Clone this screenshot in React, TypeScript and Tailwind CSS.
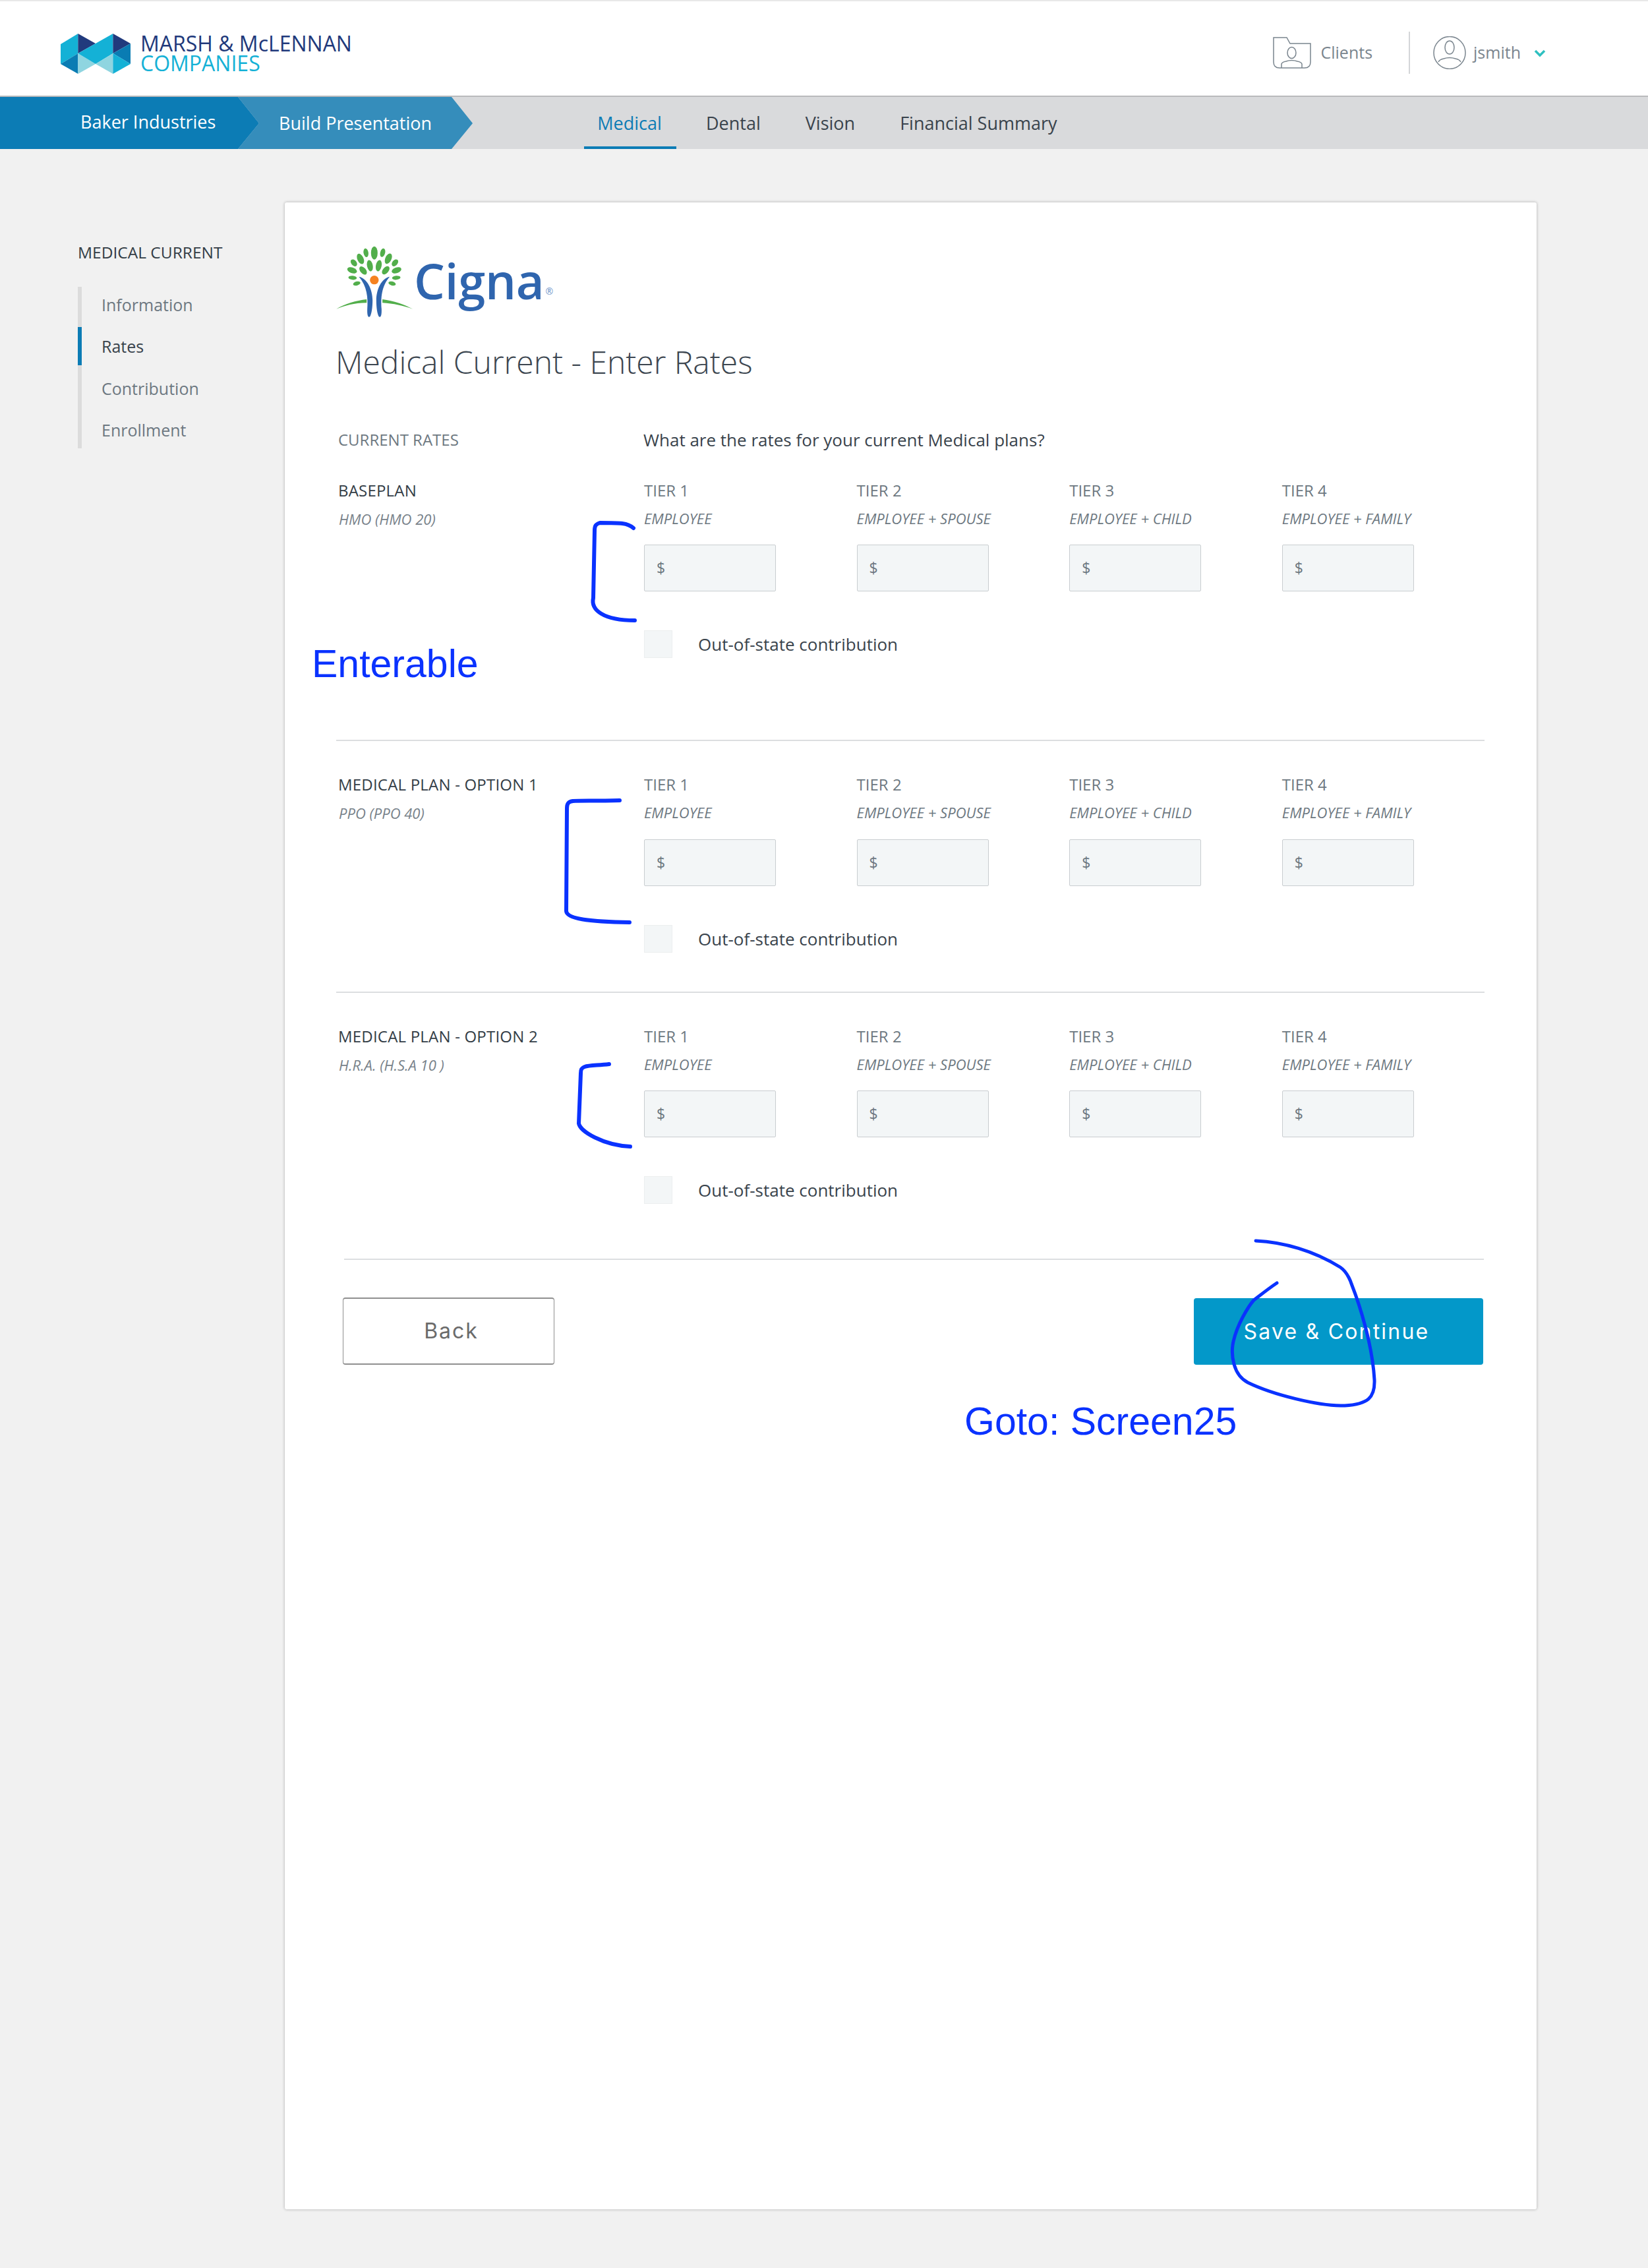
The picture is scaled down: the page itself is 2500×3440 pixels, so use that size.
const tiers = [
  { tier: 'TIER 1', who: 'EMPLOYEE' },
  { tier: 'TIER 2', who: 'EMPLOYEE + SPOUSE' },
  { tier: 'TIER 3', who: 'EMPLOYEE + CHILD' },
  { tier: 'TIER 4', who: 'EMPLOYEE + FAMILY' },
]

const leaves: [number, number, number, number, number][] = [
  [203, 95, 15, 30, 0], [165, 94, 11, 20, -10], [241, 94, 11, 20, 15],
  [140, 122, 14, 25, -25], [267, 121, 14, 25, 25], [110, 140, 12, 18, -40],
  [297, 140, 12, 18, 40], [183, 153, 13, 26, -12], [223, 153, 13, 26, 12],
  [152, 175, 13, 22, -40], [255, 174, 13, 22, 40], [102, 174, 13, 23, -70],
  [304, 174, 13, 23, 70], [104, 208, 9, 19, -85], [303, 208, 9, 19, 85],
  [123, 234, 9, 17, 75], [284, 234, 9, 17, -75],
]

function MarshLogo() {
  return (
    <div className="flex items-start">
      <svg width="106" height="61" viewBox="92 51 106 61" className="mt-[49px] ml-[92px] shrink-0">
        <polygon points="118.4,51 92,67 92,97 118.4,81" fill="#14b1d6" />
        <polygon points="92,97 118.4,81 118.4,112" fill="#0a7cb3" />
        <polygon points="118.4,81 118.4,112 145,97" fill="#8fd5e0" />
        <polygon points="118.4,51 118.4,81 145,66" fill="#213a7d" />
        <polygon points="118.4,81 171.4,51 171.4,81 145,97" fill="#14b1d6" />
        <polygon points="171.4,51 171.4,81 198,66" fill="#213a7d" />
        <polygon points="171.4,81 198,66 198,97" fill="#0a7cb3" />
        <polygon points="145,97 171.4,81 171.4,112" fill="#8fd5e0" />
        <polygon points="171.4,81 198,97 171.4,112" fill="#14b1d6" />
      </svg>
      <div className="ml-[15px] mt-[49px] font-['Open_Sans',sans-serif]">
        <div className="h-[30px] leading-[30px] text-[32px] text-[#21397b]">MARSH &amp; McLENNAN</div>
        <div className="h-[30px] leading-[30px] text-[32px] text-[#14b1d6]">COMPANIES</div>
      </div>
    </div>
  )
}

function CignaLogo() {
  return (
    <div className="flex items-start h-[107px]">
      <svg width="117" height="110" viewBox="30 60 350 330" className="shrink-0">
        {leaves.map(([cx, cy, rx, ry, r], i) => (
          <ellipse key={i} cx={cx} cy={cy} rx={rx} ry={ry} fill="#52ae4b" transform={`rotate(${r} ${cx} ${cy})`} />
        ))}
        <circle cx="203" cy="218" r="20" fill="#f58220" />
        <path d="M133 203C170 210 195 260 195 310C195 345 190 375 183 385C175 390 170 380 171 350C175 300 170 245 133 203Z" fill="#2f65ae" />
        <path d="M273 203C236 210 212 260 212 310C212 345 217 375 224 385C232 390 237 380 236 350C232 300 236 245 273 203Z" fill="#2f65ae" />
        <path d="M30 350C70 325 120 312 168 306L168 322C110 322 70 335 30 350Z" fill="#52ae4b" />
        <path d="M240 306C290 312 340 330 378 350C335 335 290 325 240 322Z" fill="#52ae4b" />
      </svg>
      <span className="ml-[1px] mt-[4px] text-[74px] tracking-[-0.2px] leading-[100px] font-semibold text-[#2f65ae] font-['Open_Sans',sans-serif]">Cigna</span>
      <span className="ml-[2px] mt-[62px] text-[14px] leading-[16px] text-[#6f95c9] font-['Open_Sans',sans-serif]">®</span>
    </div>
  )
}

function FolderIcon() {
  return (
    <svg width="58" height="48" viewBox="0 0 58 48" fill="none" stroke="#7a858e" strokeWidth="1.5" className="shrink-0">
      <path d="M1 1H21L26 10H57V38Q57 47 48 47H10Q1 47 1 38Z" />
      <ellipse cx="28.5" cy="24" rx="6.5" ry="8.5" />
      <path d="M13 47V41Q14 38 20 37Q28.5 34 37 37Q43 38 44 41V47" />
    </svg>
  )
}

function AvatarIcon() {
  return (
    <svg width="50" height="50" viewBox="0 0 50 50" fill="none" stroke="#7a858e" strokeWidth="1.5" className="shrink-0">
      <ellipse cx="25" cy="25" rx="24" ry="24.5" />
      <ellipse cx="25" cy="17" rx="7" ry="10" />
      <path d="M8 39Q10 35 16 34Q25 31 34 34Q40 35 42 39" />
    </svg>
  )
}

function PlanRow({ name, plan, top, inputGap, bottom }: { name: string; plan: string; top: number; inputGap: string; bottom: string }) {
  return (
    <div className={`flex ${bottom}`} style={{ marginTop: top }}>
      <div className="w-[467px] pl-[3px] shrink-0">
        <div className="h-[36px] leading-[33px] text-[24px] tracking-[0.2px] font-medium text-[#333d46]">{name}</div>
        <div className="h-[36px] mt-[6px] pl-[1px] leading-[36px] text-[22px] italic text-[#78828a]">{plan}</div>
      </div>
      <div className="flex-1">
        <div className="flex">
          {tiers.map(t => (
            <div key={t.tier} className="w-[322.6px] shrink-0">
              <div className="h-[36px] leading-[33px] text-[24px] text-[#6d7881]">{t.tier}</div>
              <div className="h-[36px] mt-[5px] leading-[36px] text-[22px] italic text-[#6d7881] whitespace-nowrap">{t.who}</div>
              <div className={`w-[200px] h-[71px] ${inputGap} bg-[#f3f6f7] border border-[#c9cdd0] rounded-[2px] pl-[18px] flex items-center text-[23px] text-[#6d7881]`}>$</div>
            </div>
          ))}
        </div>
        <div className="flex items-center mt-[59px]">
          <div className="w-[43px] h-[42px] bg-[#f3f6f7] border border-[#eceeef] shrink-0" />
          <span className="ml-[39px] text-[26px] leading-[42px] text-[#39434c]">Out-of-state contribution</span>
        </div>
      </div>
    </div>
  )
}

export default function App() {
  return (
    <div className="relative w-[2500px] h-[3440px] bg-[#f1f1f1] overflow-hidden font-['Open_Sans',sans-serif]">
      {/* Header */}
      <header className="h-[145px] bg-white border-t-2 border-[#e8e8e8] flex justify-between items-start">
        <MarshLogo />
        <div className="flex items-center mt-[46px] mr-[155px] h-[64px]">
          <FolderIcon />
          <span className="ml-[14px] text-[25px] text-[#7a858e]">Clients</span>
          <div className="w-[2px] h-[64px] bg-[#d4d6d8] ml-[55px]" />
          <div className="ml-[35px]"><AvatarIcon /></div>
          <span className="ml-[11px] text-[25px] text-[#7a858e]">jsmith</span>
          <svg width="18" height="12" viewBox="0 0 18 12" fill="none" stroke="#2fc0c0" strokeWidth="3.5" className="ml-[20px] mt-[2px]">
            <path d="M2 2L9 9L16 2" />
          </svg>
        </div>
      </header>

      {/* Nav */}
      <nav className="relative h-[81px] bg-[#d9dadc] border-t-2 border-[#b9babc] flex">
        <svg width="718" height="79" viewBox="0 0 718 79" className="absolute left-0 top-0">
          <polygon points="361,0 685,0 717,40 685,79 361,79 393,40" fill="#358dbb" />
          <polygon points="0,0 361,0 393,40 361,79 0,79" fill="#0c7cb5" />
        </svg>
        <div className="relative pl-[122px] w-[423px] h-[76px] leading-[76px] text-[27px] font-medium text-white">Baker Industries</div>
        <div className="relative w-[463px] h-[79px] leading-[80px] text-[27px] font-medium text-white">Build Presentation</div>
        <div className="w-[140px] h-[79px] border-b-4 border-[#0c7cb5] pr-[2px] text-center leading-[80px] text-[27px] font-medium text-[#0c7cb5]">Medical</div>
        <div className="ml-[45px] leading-[80px] text-[27px] font-medium text-[#39434c]">Dental</div>
        <div className="ml-[68px] leading-[80px] text-[27px] font-medium text-[#39434c]">Vision</div>
        <div className="ml-[68px] leading-[80px] text-[27px] font-medium text-[#39434c]">Financial Summary</div>
      </nav>

      <div className="flex">
        {/* Side menu */}
        <aside className="w-[432px] pl-[118px] pt-[137px] shrink-0">
          <div className="h-[40px] leading-[40px] text-[24.5px] text-[#333d46]">MEDICAL CURRENT</div>
          <div className="mt-[32px] text-[25px]">
            <div className="h-[61px] border-l-[6px] border-[#dcdcdc] pl-[30px] leading-[54px] text-[#6d7881]">Information</div>
            <div className="h-[58px] border-l-[6px] border-[#0c7cb5] pl-[30px] leading-[58px] font-medium text-[#39434c]">Rates</div>
            <div className="h-[63px] border-l-[6px] border-[#dcdcdc] pl-[30px] leading-[70px] text-[#6d7881]">Contribution</div>
            <div className="h-[63px] border-l-[6px] border-[#dcdcdc] pl-[30px] leading-[71px] text-[#6d7881]">Enrollment</div>
          </div>
        </aside>

        {/* Card */}
        <main className="w-[1899px] h-[3044px] mt-[81px] bg-white rounded-[3px] shadow-[0_0_4px_rgba(0,0,0,0.3)] pl-[78px] pt-[65px]">
          <CignaLogo />
          <h1 className="mt-[40px] -ml-[1px] h-[60px] leading-[60px] text-[48px] font-light text-[#3c4650]">Medical Current - Enter Rates</h1>
          <div className="mt-[68px] h-[40px] flex items-center">
            <div className="w-[466px] pl-[3px] text-[24px] text-[#6d7881]">CURRENT RATES</div>
            <div className="text-[26px] text-[#39434c]">What are the rates for your current Medical plans?</div>
          </div>

          <PlanRow name="BASEPLAN" plan="HMO (HMO 20)" top={40} inputGap="mt-[22px]" bottom="pb-[124px]" />
          <div className="w-[1742px] h-[2px] bg-[#dcdee0]" />
          <PlanRow name="MEDICAL PLAN - OPTION 1" plan="PPO (PPO 40)" top={49} inputGap="mt-[23px]" bottom="pb-[59px]" />
          <div className="w-[1742px] h-[2px] bg-[#dcdee0]" />
          <PlanRow name="MEDICAL PLAN - OPTION 2" plan="H.R.A. (H.S.A 10 )" top={49} inputGap="mt-[22px]" bottom="pb-[83px]" />
          <div className="ml-[12px] w-[1729px] h-[2px] bg-[#dcdee0]" />

          <div className="flex justify-between ml-[10px] w-[1730px] mt-[57px]">
            <div className="w-[321px] h-[102px] pl-[8px] bg-white border border-[#8f8f8f] border-y-2 rounded-[4px] flex items-center justify-center text-[32px] tracking-[2px] text-[#6b6b6b] font-['Inter',sans-serif]">Back</div>
            <div className="w-[439px] h-[101px] mt-[1px] pr-[6px] bg-[#0398c9] rounded-[4px] flex items-center justify-center text-[32px] tracking-[2.2px] text-white font-['Inter',sans-serif]">Save &amp; Continue</div>
          </div>
        </main>
      </div>

      {/* Hand-drawn annotations over the page */}
      <svg width="2500" height="3440" viewBox="0 0 2500 3440" fill="none" stroke="#0a32ff" strokeLinecap="round" strokeLinejoin="round" className="absolute left-0 top-0 pointer-events-none">
        <path strokeWidth="6" d="M961 801C952 793 942 793 910 793C904 795 902 797 902 805L900 907C896 925 915 941 963 941" />
        <path strokeWidth="6" d="M940 1214C900 1215 880 1214 869 1215C862 1216 860 1219 860 1226L859 1382C860 1393 890 1398 955 1399" />
        <path strokeWidth="6" d="M924 1614C905 1616 893 1616 887 1618C882 1620 881 1622 881 1628L878 1704C880 1716 915 1737 956 1739" />
        <path strokeWidth="5" d="M1905 1882C1947 1884 1993 1897 2033 1922C2045 1930 2050 1947 2050 1947C2063 1980 2082 2040 2085 2093C2086 2120 2075 2130 2040 2132C2000 2133 1930 2115 1893 2097C1870 2085 1868 2055 1870 2040C1875 2010 1895 1980 1902 1972C1915 1962 1925 1954 1937 1946" />
      </svg>
      <div className="absolute left-[473px] top-[973px] text-[59px] leading-[68px] text-[#0a32ff] font-['Liberation_Sans',sans-serif]">Enterable</div>
      <div className="absolute left-[1463px] top-[2122px] text-[59px] leading-[68px] text-[#0a32ff] font-['Liberation_Sans',sans-serif]">Goto: Screen25</div>
    </div>
  )
}
